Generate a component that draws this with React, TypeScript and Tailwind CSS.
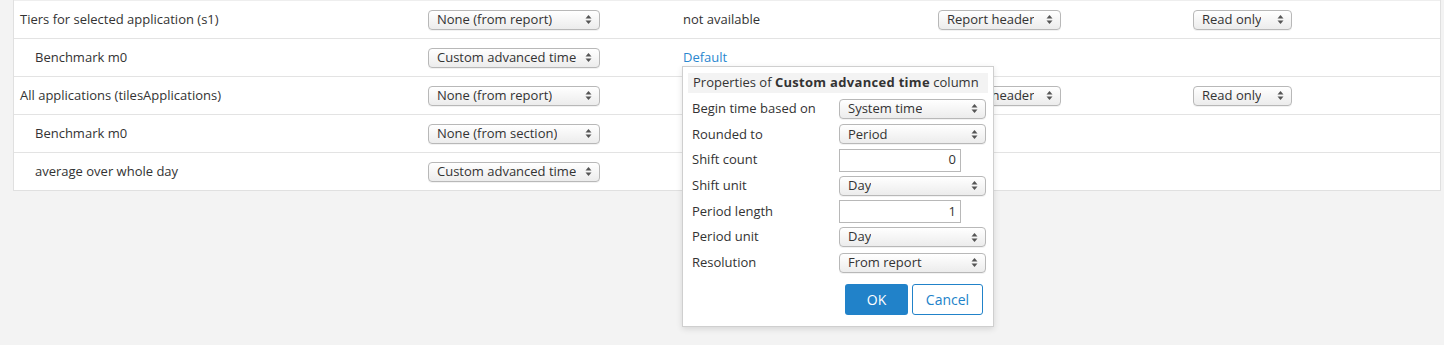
import React from "react";

//* Column mapping settings with the "custom advanced time" properties popover open.

const FONT = { fontFamily: "'Open Sans', Lato, sans-serif" };

function Arrows() {
  return (
    <svg width="7" height="11" viewBox="0 0 7 11" className="shrink-0">
      <path d="M3.5 1 L6.5 4.5 L0.5 4.5 Z" fill="#555" />
      <path d="M3.5 10 L6.5 6.5 L0.5 6.5 Z" fill="#555" />
    </svg>
  );
}

function Select({ value, width }: { value: string; width: string }) {
  return (
    <div
      className={`${width} h-[20px] flex items-center justify-between pl-[8px] pr-[7px] rounded-[4px] border border-[#b8b8b8] bg-gradient-to-b from-white to-[#ececec] text-[13px] text-[#333] shadow-[0_1px_0_rgba(0,0,0,0.05)]`}
    >
      <span className="truncate">{value}</span>
      <Arrows />
    </div>
  );
}

function NumberInput({ value }: { value: string }) {
  return (
    <div className="w-[122px] h-[23px] flex items-center justify-end pr-[4px] border border-[#b8b8b8] bg-white text-[13px] text-[#333]">
      {value}
    </div>
  );
}

type Row = {
  label: string;
  indent?: boolean;
  time: string;
  third?: React.ReactNode;
  header?: boolean;
};

const rows: Row[] = [
  { label: "Tiers for selected application (s1)", time: "None (from report)", third: "not available", header: true },
  { label: "Benchmark m0", indent: true, time: "Custom advanced time", third: <span className="text-[#2a87cf]">Default</span> },
  { label: "All applications (tilesApplications)", time: "None (from report)", header: true },
  { label: "Benchmark m0", indent: true, time: "None (from section)" },
  { label: "average over whole day", indent: true, time: "Custom advanced time" },
];

const props: { label: string; kind: "select" | "input"; value: string }[] = [
  { label: "Begin time based on", kind: "select", value: "System time" },
  { label: "Rounded to", kind: "select", value: "Period" },
  { label: "Shift count", kind: "input", value: "0" },
  { label: "Shift unit", kind: "select", value: "Day" },
  { label: "Period length", kind: "input", value: "1" },
  { label: "Period unit", kind: "select", value: "Day" },
  { label: "Resolution", kind: "select", value: "From report" },
];

function PropertiesPopover() {
  return (
    <div className="absolute left-[682px] top-[66px] w-[312px] bg-white border border-[#cfcfcf] shadow-[0_2px_6px_rgba(0,0,0,0.12)] px-[5px] pt-[6px] pb-[11px]">
      <div className="h-[20px] flex items-center bg-[#f3f3f3] pl-[5px] text-[13px] text-[#333] whitespace-nowrap overflow-hidden">
        Properties of&nbsp;<b className="tracking-[0.3px]">Custom advanced time</b>&nbsp;column
      </div>
      <div className="mt-[3px] flex flex-col">
        {props.map((p) => (
          <div key={p.label} className="h-[25.67px] flex items-center text-[13px] text-[#333]">
            <span className="w-[151px] pl-[4px]">{p.label}</span>
            {p.kind === "select" ? <Select value={p.value} width="w-[147px]" /> : <NumberInput value={p.value} />}
          </div>
        ))}
      </div>
      <div className="mt-[8px] flex justify-end gap-[4px] pr-[5px]">
        <button className="w-[63px] h-[31px] rounded-[3px] bg-[#2182c9] text-white text-[14px]">OK</button>
        <button className="w-[71px] h-[31px] rounded-[3px] border border-[#2182c9] bg-white text-[#2182c9] text-[14px]">
          Cancel
        </button>
      </div>
    </div>
  );
}

export default function App() {
  return (
    <div className="relative h-[345px] bg-[#f3f3f3] pl-[13px] pr-[3px]" style={FONT}>
      <div className="bg-white border border-[#e0e0e0] border-t-0">
        {rows.map((r, i) => (
          <div
            key={i}
            className={`grid grid-cols-[407px_255px_255px_255px_1fr] h-[38px] items-center text-[13px] text-[#333] ${
              i > 0 ? "border-t border-[#e3e3e3]" : "border-t border-[#eeeeee]"
            }`}
          >
            <div className={r.indent ? "pl-[21px]" : "pl-[6px]"}>{r.label}</div>
            <div className="pl-[7px]">
              <Select value={r.time} width="w-[172px]" />
            </div>
            <div className="pl-[7px]">{r.third}</div>
            <div className="pl-[7px]">{r.header && <Select value="Report header" width="w-[123px]" />}</div>
            <div className="pl-[7px]">{r.header && <Select value="Read only" width="w-[99px]" />}</div>
          </div>
        ))}
      </div>
      <PropertiesPopover />
    </div>
  );
}
